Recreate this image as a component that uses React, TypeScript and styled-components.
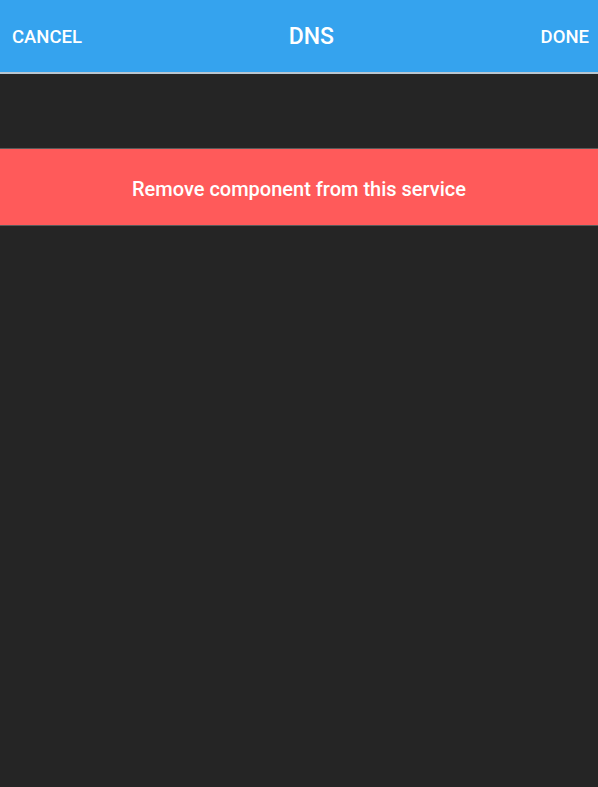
import styled, { createGlobalStyle } from 'styled-components';

const GlobalStyle = createGlobalStyle`
  html, body {
    margin: 0;
    padding: 0;
    background: #252525;
    font-family: Roboto, "Liberation Sans", sans-serif;
  }
`;

const Screen = styled.div`
  width: 598px;
  height: 787px;
  background: #252525;
  display: flex;
  flex-direction: column;
`;

const Header = styled.div`
  height: 72px;
  background: #35a3ee;
  border-bottom: 2px solid #b9c6d0;
  display: flex;
  align-items: center;
  padding: 0 9px 0 12px;
`;

const HeaderButton = styled.button`
  background: none;
  border: none;
  padding: 2px 0 0;
  color: #fff;
  font-family: inherit;
  font-weight: 500;
  font-size: 18.5px;
  cursor: pointer;
`;

const Title = styled.h1`
  flex: 1;
  text-align: center;
  margin: 0;
  color: #fff;
  font-weight: 500;
  font-size: 23px;
`;

const Body = styled.div`
  padding-top: 74px;
`;

const RemoveButton = styled.button`
  width: 100%;
  height: 78px;
  padding: 3px 0 0;
  background: #ff5a5a;
  border: none;
  border-top: 1px solid #5a5a5a;
  border-bottom: 1px solid #5a5a5a;
  color: #fff;
  font-family: inherit;
  font-weight: 500;
  font-size: 20px;
  cursor: pointer;
`;

export default function App() {
  return (
    <>
      <GlobalStyle />
      <Screen>
        <Header>
          <HeaderButton>CANCEL</HeaderButton>
          <Title>DNS</Title>
          <HeaderButton>DONE</HeaderButton>
        </Header>
        <Body>
          <RemoveButton>Remove component from this service</RemoveButton>
        </Body>
      </Screen>
    </>
  );
}
